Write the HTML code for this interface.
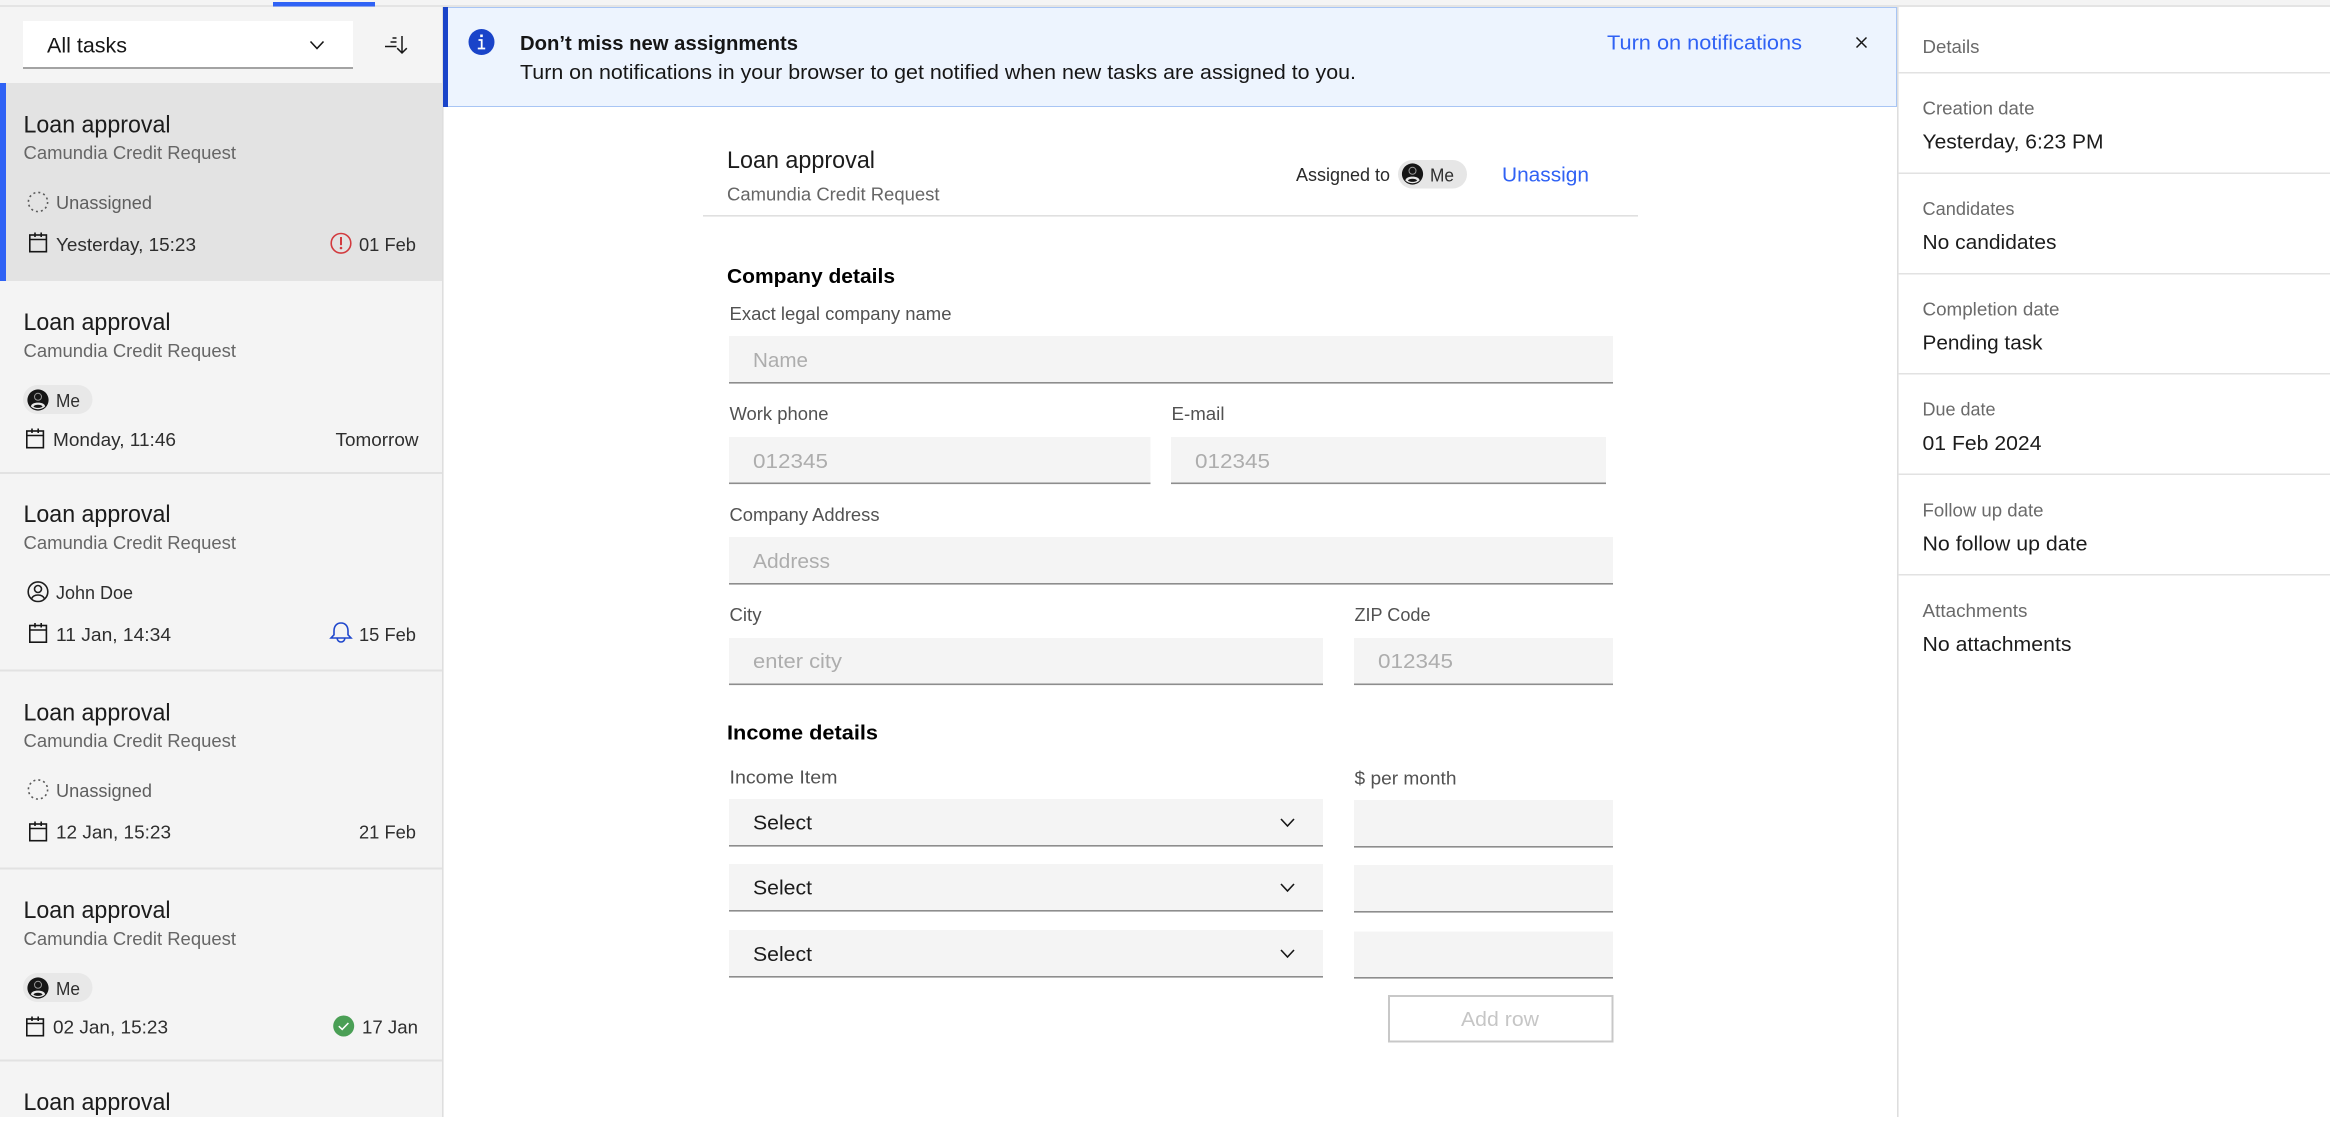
<!DOCTYPE html>
<html lang="en">
<head>
<meta charset="utf-8">
<title>Tasklist</title>
<style>
html,body{margin:0;padding:0;background:#fff;width:2330px;height:1126px;overflow:hidden}
svg{display:block}
text{font-family:"Liberation Sans",sans-serif;fill:#161616}
.t{font-size:24.5px;fill:#1c1c1c}
.s{font-size:18.5px;fill:#666}
.u{font-size:18.5px;fill:#5e5e5e}
.d{font-size:18.5px;fill:#2e2e2e}
.l{font-size:18px;fill:#525252}
.p{font-size:20px;fill:#adadad}
.v{font-size:20px;fill:#1c1c1c}
.h{font-size:20px;font-weight:700;fill:#000}
.k{font-size:18px;fill:#6a6a6a}
.b{font-size:20.5px;fill:#3062f4}
</style>
</head>
<body>
<svg width="2330" height="1126" viewBox="0 0 2330 1126" xmlns="http://www.w3.org/2000/svg">
<defs>
<g id="cal" fill="none" stroke="#161616" stroke-width="1.6">
<rect x=".8" y="2.5" width="16.6" height="16.7"/><path d="M.8 7h16.6M6 0v4.5M12.2 0v4.5"/>
</g>
<circle id="dash" r="9.6" fill="none" stroke="#5a5a5a" stroke-width="1.6" stroke-dasharray="2 3.03"/>
<g id="ava">
<circle r="10.6" fill="#161616"/>
<circle cy="-3.2" r="4" fill="#9a9a9a"/><circle cy="-3.2" r="3" fill="#161616"/>
<path d="M-7.2 6.4C-6.4 3.6-3.8 2.6 0 2.6S6.4 3.6 7.2 6.4C5.4 8.3 2.8 9.2 0 9.2S-5.4 8.3-7.2 6.4Z" fill="#e8e8e8"/>
<path d="M-4.6 6.6C-3.6 5.2-2 4.8 0 4.8S3.6 5.2 4.6 6.6C3.2 7.5 1.6 7.9 0 7.9S-3.2 7.5-4.6 6.6Z" fill="#161616"/>
</g>
<path id="chev" d="M-6.5-3.5 0 3.5 6.5-3.5" fill="none" stroke="#161616" stroke-width="1.6"/>
</defs>

<!-- top strip -->
<rect x="0" y="0" width="2330" height="5" fill="#f4f4f4"/>
<rect x="0" y="5" width="2330" height="2" fill="#e4e4e4"/>

<!-- left panel -->
<rect x="0" y="7" width="442" height="1110" fill="#f4f4f4"/>
<rect x="442" y="7" width="1.6" height="1110" fill="#dedede"/>
<rect x="273" y="2" width="102" height="4.5" fill="#2f62f5"/>

<rect x="23" y="21" width="330" height="47" fill="#fff"/>
<rect x="23" y="67" width="330" height="2" fill="#a3a3a3"/>
<text x="47" y="52.5" font-size="21" textLength="80" lengthAdjust="spacingAndGlyphs">All tasks</text>
<use href="#chev" x="317" y="45"/>
<g fill="none" stroke="#161616" stroke-width="1.5">
<path d="M392.5 38h4M390.5 42h6M385 46.5h11.5M402 36v17M397.2 48.2 402 53l4.8-4.8"/>
</g>

<!-- card 1 -->
<rect x="6" y="83" width="436" height="198" fill="#e3e3e3"/>
<rect x="0" y="83" width="6" height="198" fill="#2f62f5"/>
<text class="t" x="23.5" y="132.5" textLength="147" lengthAdjust="spacingAndGlyphs">Loan approval</text>
<text class="s" x="23.5" y="159" textLength="212.500" lengthAdjust="spacingAndGlyphs">Camundia Credit Request</text>
<use href="#dash" x="38" y="202"/>
<text class="u" x="56" y="209" textLength="96" lengthAdjust="spacingAndGlyphs">Unassigned</text>
<use href="#cal" x="29" y="232.5"/>
<text class="d" x="56" y="251" textLength="140" lengthAdjust="spacingAndGlyphs">Yesterday, 15:23</text>
<circle cx="341" cy="243.3" r="9.8" fill="none" stroke="#d23a3e" stroke-width="1.6"/>
<rect x="340" y="237" width="2" height="8.2" fill="#d23a3e"/><circle cx="341" cy="248" r="1.3" fill="#d23a3e"/>
<text class="d" x="359" y="251" textLength="57" lengthAdjust="spacingAndGlyphs">01 Feb</text>

<!-- card 2 -->
<text class="t" x="23.5" y="330" textLength="147" lengthAdjust="spacingAndGlyphs">Loan approval</text>
<text class="s" x="23.5" y="357" textLength="212.500" lengthAdjust="spacingAndGlyphs">Camundia Credit Request</text>
<rect x="23" y="385" width="69.500" height="29" rx="14.5" fill="#e8e8e8"/>
<use href="#ava" x="38" y="400"/>
<text class="d" x="56" y="407" textLength="24" lengthAdjust="spacingAndGlyphs">Me</text>
<use href="#cal" x="26" y="428.5"/>
<text class="d" x="53" y="446" textLength="123" lengthAdjust="spacingAndGlyphs">Monday, 11:46</text>
<text class="d" x="335.500" y="446" textLength="83" lengthAdjust="spacingAndGlyphs">Tomorrow</text>
<rect x="0" y="472" width="442" height="2" fill="#e2e2e2"/>

<!-- card 3 -->
<text class="t" x="23.5" y="522" textLength="147" lengthAdjust="spacingAndGlyphs">Loan approval</text>
<text class="s" x="23.5" y="549" textLength="212.500" lengthAdjust="spacingAndGlyphs">Camundia Credit Request</text>
<g fill="none" stroke="#1e1e1e" stroke-width="1.6">
<circle cx="38" cy="591.7" r="9.8"/><circle cx="38" cy="589" r="3.5"/>
<path d="M31.5 598.8c1-2.6 3.3-3.8 6.5-3.8s5.500 1.200 6.500 3.800"/>
</g>
<text class="d" x="56" y="599" textLength="77" lengthAdjust="spacingAndGlyphs">John Doe</text>
<use href="#cal" x="29" y="623"/>
<text class="d" x="56" y="641" textLength="115" lengthAdjust="spacingAndGlyphs">11 Jan, 14:34</text>
<g fill="none" stroke="#1f47cc" stroke-width="1.6">
<path d="M341 623c-4.800 0-7 3.800-7 8v3.800l-3 3.200h20l-3-3.200V631c0-4.200-2.200-8-7-8ZM337.200 638.200a3.800 3.800 0 0 0 7.600 0"/>
</g>
<text class="d" x="359" y="641" textLength="57" lengthAdjust="spacingAndGlyphs">15 Feb</text>
<rect x="0" y="669.500" width="442" height="2" fill="#e2e2e2"/>

<!-- card 4 -->
<text class="t" x="23.5" y="720.500" textLength="147" lengthAdjust="spacingAndGlyphs">Loan approval</text>
<text class="s" x="23.500" y="747" textLength="212.500" lengthAdjust="spacingAndGlyphs">Camundia Credit Request</text>
<use href="#dash" x="38" y="789.500"/>
<text class="u" x="56" y="797" textLength="96" lengthAdjust="spacingAndGlyphs">Unassigned</text>
<use href="#cal" x="29" y="821.500"/>
<text class="d" x="56" y="838.500" textLength="115" lengthAdjust="spacingAndGlyphs">12 Jan, 15:23</text>
<text class="d" x="359" y="838.500" textLength="57" lengthAdjust="spacingAndGlyphs">21 Feb</text>
<rect x="0" y="867.500" width="442" height="2" fill="#e2e2e2"/>

<!-- card 5 -->
<text class="t" x="23.5" y="918" textLength="147" lengthAdjust="spacingAndGlyphs">Loan approval</text>
<text class="s" x="23.500" y="945" textLength="212.500" lengthAdjust="spacingAndGlyphs">Camundia Credit Request</text>
<rect x="23" y="973" width="69.500" height="29" rx="14.500" fill="#e8e8e8"/>
<use href="#ava" x="38" y="988"/>
<text class="d" x="56" y="995" textLength="24" lengthAdjust="spacingAndGlyphs">Me</text>
<use href="#cal" x="26" y="1016.500"/>
<text class="d" x="53" y="1033.500" textLength="115" lengthAdjust="spacingAndGlyphs">02 Jan, 15:23</text>
<circle cx="343.700" cy="1026" r="10.500" fill="#4a9f55"/>
<path d="M338.800 1026.200l3.400 3.200 6.200-6.400" fill="none" stroke="#fff" stroke-width="1.500"/>
<text class="d" x="362" y="1033.500" textLength="56" lengthAdjust="spacingAndGlyphs">17 Jan</text>
<rect x="0" y="1059.500" width="442" height="2" fill="#e2e2e2"/>

<!-- card 6 -->
<svg x="0" y="1062" width="442" height="55" viewBox="0 1062 442 55" overflow="hidden">
<text class="t" x="23.5" y="1110" textLength="147" lengthAdjust="spacingAndGlyphs">Loan approval</text>
</svg>

<!-- notification -->
<rect x="443.500" y="7.500" width="1453" height="99" fill="#edf4fe" stroke="#a8c5f4" stroke-width="1"/>
<rect x="443" y="7" width="5" height="100" fill="#1a44c9"/>
<circle cx="481.500" cy="42" r="13" fill="#1a44c9"/>
<rect x="480.200" y="34.500" width="2.600" height="2.600" fill="#fff"/>
<path d="M478.500 40h3.200v8.200M477.800 48.500h7.400" fill="none" stroke="#fff" stroke-width="1.800"/>
<text x="520" y="50" font-size="20" font-weight="700" textLength="278" lengthAdjust="spacingAndGlyphs">Don’t miss new assignments</text>
<text x="520" y="79" font-size="20.500" textLength="836" lengthAdjust="spacingAndGlyphs">Turn on notifications in your browser to get notified when new tasks are assigned to you.</text>
<text class="b" x="1607" y="49.500" textLength="195" lengthAdjust="spacingAndGlyphs">Turn on notifications</text>
<path d="M1856.500 37.500l10 10M1866.500 37.500l-10 10" stroke="#161616" stroke-width="1.500" fill="none"/>

<!-- task header -->
<text x="727" y="168" font-size="24.500" style="fill:#1c1c1c" textLength="148" lengthAdjust="spacingAndGlyphs">Loan approval</text>
<text class="s" x="727" y="200.500" textLength="212.500" lengthAdjust="spacingAndGlyphs">Camundia Credit Request</text>
<text x="1296" y="181" font-size="18.500" style="fill:#2a2a2a" textLength="94" lengthAdjust="spacingAndGlyphs">Assigned to</text>
<rect x="1398" y="160" width="69" height="28.500" rx="14.250" fill="#e6e6e6"/>
<use href="#ava" x="1412.500" y="174"/>
<text class="d" x="1430" y="181.500" textLength="24" lengthAdjust="spacingAndGlyphs">Me</text>
<text class="b" x="1502" y="181.500" textLength="87" lengthAdjust="spacingAndGlyphs">Unassign</text>
<rect x="703" y="215" width="935" height="1.600" fill="#e0e0e0"/>

<!-- form: company -->
<text class="h" x="727" y="283" textLength="168" lengthAdjust="spacingAndGlyphs">Company details</text>
<text class="l" x="729.500" y="320" textLength="222" lengthAdjust="spacingAndGlyphs">Exact legal company name</text>
<rect x="729" y="336" width="884" height="47" fill="#f4f4f4"/><rect x="729" y="382" width="884" height="1.600" fill="#8d8d8d"/>
<text class="p" x="753" y="367" textLength="55" lengthAdjust="spacingAndGlyphs">Name</text>

<text class="l" x="729.500" y="420" textLength="99" lengthAdjust="spacingAndGlyphs">Work phone</text>
<text class="l" x="1171.500" y="420" textLength="53" lengthAdjust="spacingAndGlyphs">E-mail</text>
<rect x="729" y="437" width="421.500" height="47" fill="#f4f4f4"/><rect x="729" y="482.500" width="421.500" height="1.600" fill="#8d8d8d"/>
<rect x="1171" y="437" width="435" height="47" fill="#f4f4f4"/><rect x="1171" y="482.500" width="435" height="1.600" fill="#8d8d8d"/>
<text class="p" x="753" y="468" textLength="75" lengthAdjust="spacingAndGlyphs">012345</text>
<text class="p" x="1195" y="468" textLength="75" lengthAdjust="spacingAndGlyphs">012345</text>

<text class="l" x="729.500" y="521" textLength="150" lengthAdjust="spacingAndGlyphs">Company Address</text>
<rect x="729" y="537" width="884" height="47" fill="#f4f4f4"/><rect x="729" y="583" width="884" height="1.600" fill="#8d8d8d"/>
<text class="p" x="753" y="568" textLength="77" lengthAdjust="spacingAndGlyphs">Address</text>

<text class="l" x="729.500" y="621" textLength="32" lengthAdjust="spacingAndGlyphs">City</text>
<text class="l" x="1354.500" y="621" textLength="76" lengthAdjust="spacingAndGlyphs">ZIP Code</text>
<rect x="729" y="638" width="594" height="47" fill="#f4f4f4"/><rect x="729" y="683.500" width="594" height="1.600" fill="#8d8d8d"/>
<rect x="1354" y="638" width="259" height="47" fill="#f4f4f4"/><rect x="1354" y="683.500" width="259" height="1.600" fill="#8d8d8d"/>
<text class="p" x="753" y="668" textLength="89" lengthAdjust="spacingAndGlyphs">enter city</text>
<text class="p" x="1378" y="668" textLength="75" lengthAdjust="spacingAndGlyphs">012345</text>

<!-- form: income -->
<text class="h" x="727" y="739.500" textLength="151" lengthAdjust="spacingAndGlyphs">Income details</text>
<text class="l" x="729.500" y="783.500" textLength="108" lengthAdjust="spacingAndGlyphs">Income Item</text>
<text class="l" x="1354.500" y="784.500" textLength="102" lengthAdjust="spacingAndGlyphs">$ per month</text>

<rect x="729" y="799" width="594" height="47.500" fill="#f4f4f4"/><rect x="729" y="845" width="594" height="1.600" fill="#8d8d8d"/>
<rect x="729" y="864" width="594" height="47.500" fill="#f4f4f4"/><rect x="729" y="910" width="594" height="1.600" fill="#8d8d8d"/>
<rect x="729" y="930" width="594" height="47.500" fill="#f4f4f4"/><rect x="729" y="976" width="594" height="1.600" fill="#8d8d8d"/>
<text class="v" x="753" y="829.500" textLength="59" lengthAdjust="spacingAndGlyphs">Select</text>
<text class="v" x="753" y="894.500" textLength="59" lengthAdjust="spacingAndGlyphs">Select</text>
<text class="v" x="753" y="961" textLength="59" lengthAdjust="spacingAndGlyphs">Select</text>
<use href="#chev" x="1287.500" y="822.500"/>
<use href="#chev" x="1287.500" y="887.500"/>
<use href="#chev" x="1287.500" y="953.500"/>

<rect x="1354" y="800" width="259" height="47.500" fill="#f4f4f4"/><rect x="1354" y="846" width="259" height="1.600" fill="#8d8d8d"/>
<rect x="1354" y="865" width="259" height="47.500" fill="#f4f4f4"/><rect x="1354" y="911" width="259" height="1.600" fill="#8d8d8d"/>
<rect x="1354" y="931.500" width="259" height="47" fill="#f4f4f4"/><rect x="1354" y="977" width="259" height="1.600" fill="#8d8d8d"/>

<rect x="1389" y="996" width="223.500" height="45.500" fill="#fff" stroke="#c8c8c8" stroke-width="2"/>
<text x="1461" y="1026" font-size="20" style="fill:#c6c6c6" textLength="78" lengthAdjust="spacingAndGlyphs">Add row</text>

<!-- right panel -->
<rect x="1897" y="7" width="1.600" height="1110" fill="#dedede"/>
<text class="k" x="1922.500" y="53" textLength="57" lengthAdjust="spacingAndGlyphs">Details</text>
<rect x="1898" y="72" width="432" height="1.500" fill="#e2e2e2"/>
<text class="k" x="1922.500" y="114.500" textLength="112" lengthAdjust="spacingAndGlyphs">Creation date</text>
<text class="v" x="1922.500" y="148.500" textLength="181" lengthAdjust="spacingAndGlyphs">Yesterday, 6:23 PM</text>
<rect x="1898" y="172.500" width="432" height="1.500" fill="#e2e2e2"/>
<text class="k" x="1922.500" y="215" textLength="92" lengthAdjust="spacingAndGlyphs">Candidates</text>
<text class="v" x="1922.500" y="249" textLength="134" lengthAdjust="spacingAndGlyphs">No candidates</text>
<rect x="1898" y="273" width="432" height="1.500" fill="#e2e2e2"/>
<text class="k" x="1922.500" y="315.500" textLength="137" lengthAdjust="spacingAndGlyphs">Completion date</text>
<text class="v" x="1922.500" y="349.500" textLength="120" lengthAdjust="spacingAndGlyphs">Pending task</text>
<rect x="1898" y="373" width="432" height="1.500" fill="#e2e2e2"/>
<text class="k" x="1922.500" y="415.500" textLength="73" lengthAdjust="spacingAndGlyphs">Due date</text>
<text class="v" x="1922.500" y="450" textLength="119" lengthAdjust="spacingAndGlyphs">01 Feb 2024</text>
<rect x="1898" y="473.500" width="432" height="1.500" fill="#e2e2e2"/>
<text class="k" x="1922.500" y="516.500" textLength="121" lengthAdjust="spacingAndGlyphs">Follow up date</text>
<text class="v" x="1922.500" y="550.500" textLength="165" lengthAdjust="spacingAndGlyphs">No follow up date</text>
<rect x="1898" y="574" width="432" height="1.500" fill="#e2e2e2"/>
<text class="k" x="1922.500" y="617" textLength="105" lengthAdjust="spacingAndGlyphs">Attachments</text>
<text class="v" x="1922.500" y="651" textLength="149" lengthAdjust="spacingAndGlyphs">No attachments</text>
</svg>
</body>
</html>
